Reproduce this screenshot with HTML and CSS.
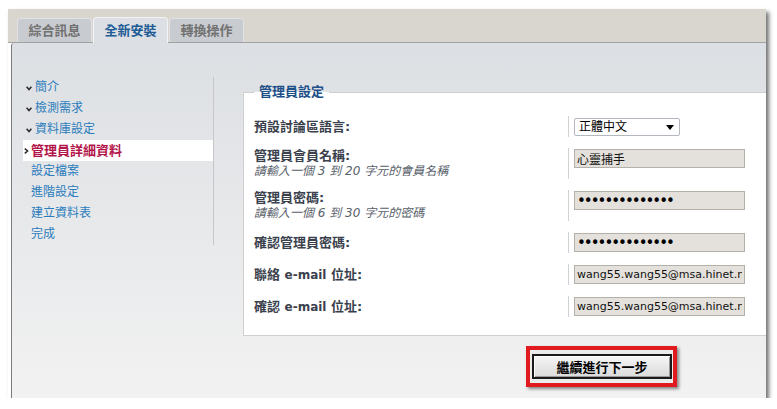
FILE: index.html
```html
<!DOCTYPE html>
<html lang="zh-Hant">
<head>
<meta charset="utf-8">
<title>全新安裝 - 管理員詳細資料</title>
<link rel="stylesheet" href="styles.css">
</head>
<body>
<div class="window">
  <div class="tabbar">
    <div class="tab">綜合訊息</div>
    <div class="tab active">全新安裝</div>
    <div class="tab">轉換操作</div>
  </div>
  <div class="panel">
    <nav class="sidebar">
      <ul class="steps">
        <li class="done"><svg class="chev" width="6" height="5" viewBox="0 0 6 5"><path d="M0.6 0.8 L3 3.6 L5.4 0.8" fill="none" stroke="#2b2b2b" stroke-width="1.5"/></svg><a href="#">簡介</a></li>
        <li class="done"><svg class="chev" width="6" height="5" viewBox="0 0 6 5"><path d="M0.6 0.8 L3 3.6 L5.4 0.8" fill="none" stroke="#2b2b2b" stroke-width="1.5"/></svg><a href="#">檢測需求</a></li>
        <li class="done"><svg class="chev" width="6" height="5" viewBox="0 0 6 5"><path d="M0.6 0.8 L3 3.6 L5.4 0.8" fill="none" stroke="#2b2b2b" stroke-width="1.5"/></svg><a href="#">資料庫設定</a></li>
        <li class="current"><svg class="chev" width="5" height="6" viewBox="0 0 5 6"><path d="M0.8 0.6 L3.6 3 L0.8 5.4" fill="none" stroke="#2b2b2b" stroke-width="1.5"/></svg><span>管理員詳細資料</span></li>
        <li class="todo">設定檔案</li>
        <li class="todo">進階設定</li>
        <li class="todo">建立資料表</li>
        <li class="todo">完成</li>
      </ul>
    </nav>
    <main class="content">
      <fieldset class="box">
        <legend>管理員設定</legend>
        <div class="form">
          <div class="lbl"><div class="label">預設討論區語言:</div></div>
          <div class="fld">
            <div class="select-wrap">
              <select class="select"><option>正體中文</option></select>
              <svg class="arrow" width="8" height="5" viewBox="0 0 8 5"><path d="M0 0 H8 L4 5 Z" fill="#000"/></svg>
            </div>
          </div>

          <div class="lbl"><div class="label">管理員會員名稱:</div><div class="hint">請輸入一個 3 到 20 字元的會員名稱</div></div>
          <div class="fld"><input class="inp" type="text" value="心靈捕手" readonly></div>

          <div class="lbl"><div class="label">管理員密碼:</div><div class="hint">請輸入一個 6 到 30 字元的密碼</div></div>
          <div class="fld"><input class="inp pw" type="password" value="12345678901234" readonly></div>

          <div class="lbl"><div class="label">確認管理員密碼:</div></div>
          <div class="fld"><input class="inp pw" type="password" value="12345678901234" readonly></div>

          <div class="lbl"><div class="label">聯絡 <span class="latin">e-mail</span> 位址:</div></div>
          <div class="fld"><input class="inp mail" type="text" value="wang55.wang55@msa.hinet.net" readonly></div>

          <div class="lbl"><div class="label">確認 <span class="latin">e-mail</span> 位址:</div></div>
          <div class="fld"><input class="inp mail" type="text" value="wang55.wang55@msa.hinet.net" readonly></div>
        </div>
      </fieldset>
      <div class="actions">
        <div class="highlight"><button class="btn" type="button">繼續進行下一步</button></div>
      </div>
    </main>
  </div>
</div>
</body>
</html>
```
FILE: styles.css
```css
* { box-sizing: border-box; }
html, body { margin: 0; background: #fff; }
body {
  padding: 9px 0 0 8px;
  font-family: "DejaVu Sans", "Noto Sans CJK TC", sans-serif;
  font-size: 12px;
}

.window {
  width: 758px;
  height: 389px;
  display: flex;
  flex-direction: column;
  box-shadow: 3px 3px 4px rgba(0, 0, 0, 0.55);
}

/* tabs */
.tabbar {
  height: 34px;
  flex: none;
  display: flex;
  align-items: flex-end;
  gap: 1px;
  padding-left: 9px;
  background: #d9d6d0;
  border-bottom: 1px solid #a2a2a2;
}
.tab {
  height: 24px;
  padding: 0 10.5px;
  line-height: 23px;
  font-size: 13px;
  font-weight: bold;
  color: #717171;
  background: #c8cbd0;
  border: 1px solid #e2e2e2;
  border-bottom: none;
  border-radius: 4px 4px 0 0;
}
.tab.active {
  height: 26px;
  margin-bottom: -1px;
  line-height: 25px;
  color: #215c96;
  background: #dcdfe3;
  border-color: #f2f3f5;
}

/* panel */
.panel {
  flex: 1;
  display: flex;
  margin-left: 3px;
  border-left: 1px solid #7c7c7c;
  border-top-left-radius: 3px;
  background: linear-gradient(#dcdfe3, #f2f2f2);
}

.sidebar {
  width: 202px;
  flex: none;
  height: 168px;
  margin-top: 34px;
  border-right: 1px solid #c5c7ca;
}
.steps {
  list-style: none;
  margin: 0 0 0 11px;
  padding: 0;
}
.steps li {
  height: 21px;
  line-height: 21px;
  display: flex;
  align-items: center;
  font-size: 12px;
  color: #2a7cbc;
}
.steps a { color: #2a7cbc; text-decoration: none; }
.steps .chev { flex: none; }
.steps li.done { padding-left: 3px; }
.steps li.done .chev { margin-right: 3px; margin-top: 2px; }
.steps li.current {
  padding-left: 1px;
  background: #fff;
  color: #b3164a;
  font-size: 13px;
  font-weight: bold;
}
.steps li.current .chev { margin-right: 2px; margin-top: 1px; }
.steps li.todo { padding-left: 8px; }

/* content */
.content {
  flex: 1;
  min-width: 0;
  display: flex;
  flex-direction: column;
  padding-left: 29px;
}
.box {
  margin: 41px 0 0;
  padding: 16px 0 18px 10px;
  min-width: 0;
  background: #fff;
  border: 1px solid #cfcfcf;
  border-right: none;
}
.box legend {
  padding: 0 5px;
  font-size: 13px;
  line-height: 16px;
  font-weight: bold;
  color: #1d4f88;
}

.form {
  display: grid;
  grid-template-columns: 314px 1fr;
  row-gap: 11px;
}
.lbl { align-self: center; }
.label {
  font-size: 13px;
  line-height: 15px;
  font-weight: bold;
  color: #3a414c;
}
.label .latin { font-size: 12px; }
.hint {
  font-size: 12px;
  line-height: 16px;
  font-style: italic;
  color: #58606a;
}
.fld {
  border-left: 1px solid #d2d2d2;
  padding: 1px 0 1px 5px;
  min-height: 21px;
}

.select-wrap {
  position: relative;
  width: 106px;
  height: 18px;
  margin-top: 1px;
}
.select {
  appearance: none;
  -webkit-appearance: none;
  width: 106px;
  height: 18px;
  margin: 0;
  padding: 0 0 0 4px;
  border: 1px solid #b3b8bf;
  border-radius: 2px;
  background: #fff;
  font-family: "DejaVu Sans", "Noto Sans CJK TC", sans-serif;
  font-size: 12px;
  color: #000;
}
.arrow {
  position: absolute;
  right: 6px;
  top: 7px;
  pointer-events: none;
}

.inp {
  display: block;
  width: 171px;
  height: 19px;
  margin: 0;
  padding: 0 2px;
  border: 1px solid #b4b1ab;
  background: #e4e1dc;
  font-family: "DejaVu Sans", "Noto Sans CJK TC", sans-serif;
  font-size: 12px;
  color: #111;
  outline: none;
}
.inp.pw {
  font-size: 15px;
  letter-spacing: -2px;
  color: #000;
}
.inp.mail { font-size: 11px; }

.actions {
  display: flex;
  align-items: flex-start;
  padding: 10px 0 0 283px;
}
.highlight {
  border: 4px solid #e01a1f;
  padding: 4px 1px 4px 2px;
  background: #ececec;
  box-shadow: 2px 2px 3px rgba(0, 0, 0, 0.45);
}
.btn {
  display: block;
  width: 140px;
  height: 25px;
  margin: 0;
  padding: 0;
  border: 2px solid #1a1a1a;
  background: linear-gradient(#f6f6f6, #dadada);
  box-shadow: inset 1px 1px 0 #fff, inset -1px -1px 0 #9a9a9a;
  font-family: "DejaVu Sans", "Noto Sans CJK TC", sans-serif;
  font-size: 13px;
  font-weight: bold;
  color: #000;
}
```
